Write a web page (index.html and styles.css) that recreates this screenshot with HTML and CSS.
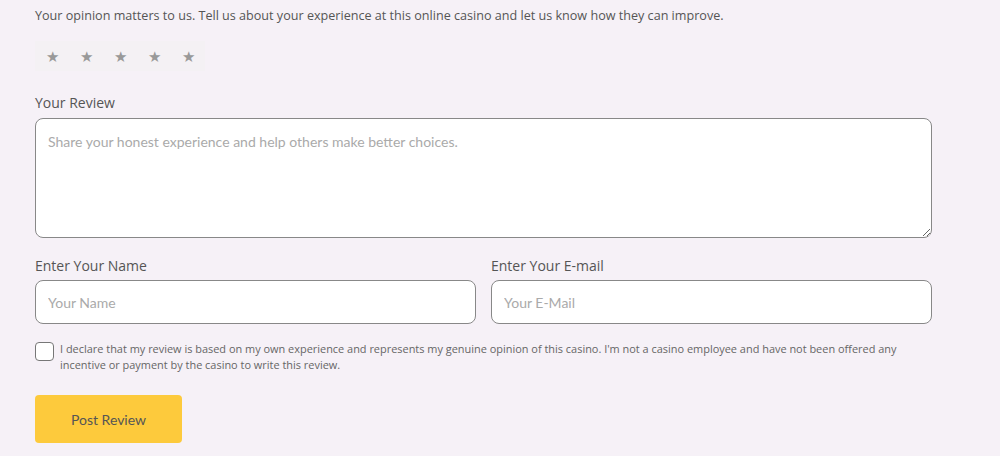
FILE: index.html
```html
<!DOCTYPE html>
<html lang="en">
<head>
    <meta charset="UTF-8">
    <meta name="viewport" content="width=device-width, initial-scale=1.0">
    <title>Write a Review</title>
    <link rel="stylesheet" href="styles.css">
</head>
<body>
    <div class="container">
        <p class="intro">Your opinion matters to us. Tell us about your experience at this online casino and let us know how they can improve.</p>

        <div class="stars">
            <span class="star">&#9733;</span>
            <span class="star">&#9733;</span>
            <span class="star">&#9733;</span>
            <span class="star">&#9733;</span>
            <span class="star">&#9733;</span>
        </div>

        <form class="review-form">
            <label for="review" class="label">Your Review</label>
            <textarea id="review" class="field textarea" placeholder="Share your honest experience and help others make better choices."></textarea>

            <div class="row">
                <div class="col">
                    <label for="name" class="label">Enter Your Name</label>
                    <input type="text" id="name" class="field input" placeholder="Your Name">
                </div>
                <div class="col">
                    <label for="email" class="label">Enter Your E-mail</label>
                    <input type="email" id="email" class="field input" placeholder="Your E-Mail">
                </div>
            </div>

            <label class="declare">
                <input type="checkbox" class="checkbox">
                <span>I declare that my review is based on my own experience and represents my genuine opinion of this casino. I'm not a casino employee and have not been offered any incentive or payment by the casino to write this review.</span>
            </label>

            <button type="submit" class="button">Post Review</button>
        </form>
    </div>
</body>
</html>
```

FILE: styles.css
```css
body {
    margin: 0;
    background-color: #f6f1f7;
    font-family: "Open Sans", Arial, sans-serif;
    color: #555;
}
.container {
    width: 897px;
    padding: 7px 0 0 35px;
}
.intro {
    margin: 0;
    font-size: 12.6px;
    line-height: 18px;
    color: #555;
}
.stars {
    display: flex;
    margin-top: 16px;
}
.star {
    width: 34px;
    height: 30px;
    display: flex;
    align-items: center;
    justify-content: center;
    background-color: #f4f1f4;
    color: #999;
    font-size: 15px;
}
.review-form {
    display: flex;
    flex-direction: column;
    margin-top: 22px;
}
.label {
    display: block;
    font-size: 14px;
    line-height: 19px;
    margin-bottom: 6px;
    color: #555;
}
.field {
    box-sizing: border-box;
    width: 100%;
    border: 1px solid #888;
    border-radius: 8px;
    background-color: #fff;
    font-family: Lato, "Open Sans", sans-serif;
    font-size: 14px;
    color: #555;
    padding: 0 12px;
}
.field::placeholder {
    color: #aaa;
}
.textarea {
    height: 120px;
    padding-top: 14px;
    resize: vertical;
    margin: 0;
}
.row {
    display: flex;
    gap: 15px;
    margin-top: 18px;
}
.col {
    flex: 1;
}
.col .label {
    margin-bottom: 5px;
}
.input {
    height: 44px;
}
.declare {
    display: flex;
    align-items: flex-start;
    gap: 6px;
    margin-top: 17px;
    font-size: 10.95px;
    line-height: 16px;
    color: #666;
}
.checkbox {
    appearance: none;
    flex: none;
    width: 19px;
    height: 19px;
    margin: 1px 0 0;
    border: 1px solid #777;
    border-radius: 4px;
    background-color: #fff;
}
.button {
    align-self: flex-start;
    width: 147px;
    height: 48px;
    margin-top: 22px;
    background-color: #fdca3c;
    border: none;
    border-radius: 4px;
    font-family: Lato, "Open Sans", sans-serif;
    font-size: 14px;
    color: #555;
    cursor: pointer;
}
```
